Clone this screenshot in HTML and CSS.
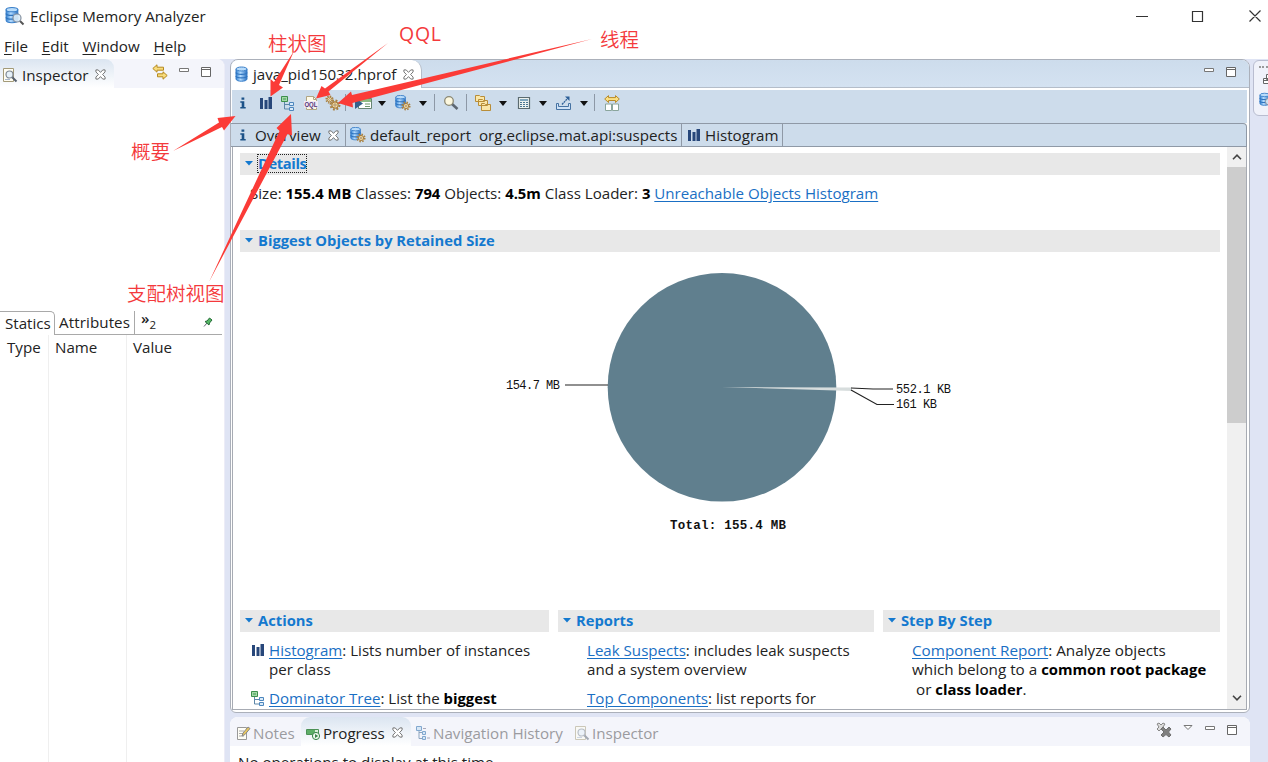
FILE: index.html
```html
<!DOCTYPE html>
<html lang="en">

<head>
    <meta charset="UTF-8">
    <meta name="viewport" content="width=device-width, initial-scale=1.0">
    <title>Eclipse Memory Analyzer</title>
    <link rel="stylesheet" href="styles.css">
</head>

<body>
    <!-- icon set -->
    <svg class="defs" width="0" height="0">
        <linearGradient id="blue" x1="0" x2="1">
            <stop offset="0" stop-color="#2f7fd0" />
            <stop offset=".4" stop-color="#b5dcff" />
            <stop offset="1" stop-color="#2a70c0" />
        </linearGradient>
        <symbol id="db" viewBox="0 0 16 16">
            <path d="M2 3v10c0 3 11 3 11 0V3z" fill="url(#blue)" stroke="#3a7fc9" />
            <ellipse cx="7.500" cy="3" rx="5.500" ry="2" fill="#b9dcfa" stroke="#3a7fc9" />
            <path d="M2 6.500c0 2.500 11 2.500 11 0M2 10c0 2.500 11 2.500 11 0" fill="none" stroke="#2f74bf" stroke-width="1.200" />
        </symbol>
        <symbol id="gear" viewBox="0 0 16 16">
            <circle cx="8" cy="8" r="6" fill="none" stroke="#a9803f" stroke-width="2.600" stroke-dasharray="2.500 2.212" />
            <circle cx="8" cy="8" r="4.200" fill="#f6dfa8" stroke="#a47a3a" stroke-width="1.500" />
            <circle cx="8" cy="8" r="1.500" fill="#fff" stroke="#8a6430" />
        </symbol>
        <symbol id="dbgear" viewBox="0 0 16 16">
            <use href="#db" x="-1" y="-1" width="14" height="15" />
            <use href="#gear" x="6" y="6" width="10" height="10" />
        </symbol>
        <symbol id="app" viewBox="0 0 20 20">
            <use href="#db" x="-1" y="0" width="17" height="18" />
            <path d="M14.500 14.500l4 4" stroke="#555" stroke-width="2" />
            <circle cx="12" cy="12" r="4" fill="#dcecf8" fill-opacity=".9" stroke="#8792a0" stroke-width="1.200" />
        </symbol>
        <symbol id="info" viewBox="0 0 16 16">
            <path d="M6.500 2.500h2.800v2.300H6.500zM5.300 6.300h4v5.800h1.400v1.400H5.300v-1.400h1.400V7.700H5.300z" fill="#1c5288" />
        </symbol>
        <symbol id="bars" viewBox="0 0 16 16">
            <path d="M2 3h3v11H2zM6.500 5h3v9h-3zM10.500 2h3.500v12h-3.500z" fill="#27477a" />
        </symbol>
        <symbol id="tree" viewBox="0 0 16 16">
            <path d="M4.500 7v7H9M4.500 9.500H9" fill="none" stroke="#5d87a8" />
            <path d="M1.500 1.500h6v5h-6z" fill="#a5d8a8" stroke="#3d8f4c" />
            <path d="M3 3h3v2H3z" fill="#6fb97b" />
            <path d="M9.500 7.500h4v3h-4zM9.500 12.500h4v3h-4z" fill="#d9ebfa" stroke="#4d86bd" />
        </symbol>
        <symbol id="gears" viewBox="0 0 16 16">
            <use href="#gear" x="0" y="0" width="9" height="9" />
            <use href="#gear" x="4" y="4" width="12" height="12" />
        </symbol>
        <symbol id="run" viewBox="0 0 18 16">
            <path d="M4.500 3.500h13v10h-13z" fill="#fff" stroke="#678573" />
            <path d="M5 4h12v3H5z" fill="#8dbb84" />
            <path d="M11 9h5M11 11.500h5" stroke="#6f9870" />
            <path d="M1 3v11l8-5.500z" fill="#35608b" />
        </symbol>
        <symbol id="search" viewBox="0 0 16 16">
            <path d="M9 9l5.500 5" stroke="#5d6772" stroke-width="2.600" />
            <circle cx="6" cy="6" r="4.300" fill="#fdf8df" stroke="#8c8974" stroke-width="1.300" />
        </symbol>
        <symbol id="inspect" viewBox="0 0 16 16">
            <path d="M1.500 1.500h10v13h-10z" fill="#fffdf3" stroke="#a39a78" />
            <path d="M3 12.500h5" stroke="#a6b7cc" />
            <path d="M10 10l4.500 4.500" stroke="#555f6d" stroke-width="2" />
            <circle cx="7.500" cy="7.500" r="3.500" fill="#e6f1f9" stroke="#7d8793" stroke-width="1.200" />
        </symbol>
        <symbol id="folders" viewBox="0 0 16 16">
            <path d="M.5.500h4l1 1h4v5h-9zM3.500 4.500h4l1 1h4v5h-9zM6.500 8.500h3l1 1h5v6h-9z" fill="#fbe7a8" stroke="#b88d38" />
        </symbol>
        <symbol id="calc" viewBox="0 0 16 16">
            <path d="M2.500 2.500h11v11h-11z" fill="#eef3f0" stroke="#5b6b70" stroke-width="1.200" />
            <path d="M4 4h8v2H4z" fill="#7fa6bd" />
            <path d="M4 7.500h8M4 9.500h8M4 11.500h8" stroke="#4c7792" stroke-width="1.200" stroke-dasharray="2 1" />
        </symbol>
        <symbol id="export" viewBox="0 0 16 16">
            <path d="M.5 8.500v6h14v-6h-2v3h-10v-3z" fill="#cfe2f7" stroke="#4673a3" />
            <path d="M6 9.500l6-6.500" fill="none" stroke="#2c5f98" stroke-width="1.300" stroke-dasharray="2 .6" />
            <path d="M9 1.500h4.500V6z" fill="#2c5f98" />
        </symbol>
        <symbol id="compare" viewBox="0 0 16 16">
            <path d="M.7 4L4.500.6v2h7v-2L15.300 4l-3.800 3.500v-2h-7v2z" fill="#fbe084" stroke="#b98b28" />
            <path d="M1.500 9h6v6.500h-6zM8.500 9h6v6.500h-6z" fill="#fff" stroke="#8aa59c" />
        </symbol>
        <symbol id="close" viewBox="0 0 12 12">
            <path d="M1 1h2.500L6 3.700 8.500 1H11v2.200L8.300 6 11 8.800V11H8.500L6 8.300 3.500 11H1V8.800L3.700 6 1 3.200z" fill="#fff" stroke="#6a6a6a" />
        </symbol>
        <symbol id="sync" viewBox="0 0 16 16">
            <path d="M.8 4.500L5 .8v2.400h6.500v3H5v2zM15.200 11.500L11 15.200v-2.400H5.500v-3H11v-2z" fill="#f8dc7d" stroke="#b58920" />
        </symbol>
        <symbol id="min" viewBox="0 0 12 12">
            <path d="M1.500 2.500h9v3h-9z" fill="#fff" stroke="#777" />
        </symbol>
        <symbol id="max" viewBox="0 0 12 12">
            <path d="M1.500 1.500h9v9h-9zM1.500 3.500h9" fill="#fff" stroke="#666" />
        </symbol>
        <symbol id="pin" viewBox="0 0 10 10">
            <path d="M1 9.500L4 6" stroke="#667" />
            <path d="M2 4.500l2-.5 2.500-3 2.500 2L6.500 6 6 8z" fill="#55b765" stroke="#236b35" />
        </symbol>
        <symbol id="notes" viewBox="0 0 16 16">
            <path d="M2.500 2.500h9v12h-9z" fill="#fffef6" stroke="#999" />
            <path d="M4 6h5M4 8.500h4M4 11h5" stroke="#aaa" />
            <path d="M7 11l1-3 5-6 2 1.500-5 6z" fill="#e8c65d" stroke="#888" />
        </symbol>
        <symbol id="progress" viewBox="0 0 16 16">
            <path d="M1.500 4.500h12v5h-12z" fill="#d9eed9" stroke="#4b9156" />
            <path d="M2 5h8v4H2z" fill="#5eae68" />
            <circle cx="11" cy="11" r="3.600" fill="#eff9ef" stroke="#388348" />
            <path d="M10 9v4l3.200-2z" fill="#388348" />
        </symbol>
        <symbol id="nav" viewBox="0 0 16 16">
            <path d="M4 5v8.500h3M4 7.500h3" fill="none" stroke="#8ba4bf" />
            <path d="M1.500 1.500h5v4h-5zM7.500 6.500h3v3h-3zM7.500 11.500h3v3h-3z" fill="#d7e7f6" stroke="#82a8cf" />
            <path d="M8 3.500h3M12 13h3" stroke="#aab" />
        </symbol>
        <symbol id="clear" viewBox="0 0 16 16">
            <path d="M1 2l2-1 2 2 2-2 2 1-2 3 2 2-2 2-2-2-2 2-2-2 2-2z" fill="#ddd" stroke="#888" />
            <path d="M5 7l2-2 3 3 3-3 2 2-2.500 3 2.500 3-2 2-3-2.500L7 15l-2-2 3-3z" fill="#808080" stroke="#707070" />
        </symbol>
        <symbol id="twisty" viewBox="0 0 8 5">
            <path d="M0 0h8L4 4.500z" fill="#1479cf" />
        </symbol>
    </svg>

    <header class="titlebar">
        <svg class="app-icon"><use href="#app" /></svg>
        <span class="app-title">Eclipse Memory Analyzer</span>
        <svg class="window-buttons" viewBox="0 0 126 14">
            <path d="M0 7.500h12M56.500 2.500h10v10h-10zM113.500 1.500l11 11M124.500 1.500l-11 11" fill="none" stroke="#333" stroke-width="1.200" />
        </svg>
    </header>
    <nav class="menubar">
        <span><u>F</u>ile</span>
        <span><u>E</u>dit</span>
        <span><u>W</u>indow</span>
        <span><u>H</u>elp</span>
    </nav>

    <main class="workbench">
        <aside class="inspector">
            <div class="view-header">
                <div class="view-tab inspector-tab">
                    <svg class="icon"><use href="#inspect" /></svg>
                    <span>Inspector</span>
                    <svg class="close"><use href="#close" /></svg>
                </div>
                <div class="view-tools">
                    <svg class="icon"><use href="#sync" /></svg>
                    <svg class="tool"><use href="#min" /></svg>
                    <svg class="tool"><use href="#max" /></svg>
                </div>
            </div>
            <div class="inspector-body"></div>
            <div class="sub-tabs">
                <div class="sub-tab selected">Statics</div>
                <div class="sub-tab attributes">Attributes</div>
                <div class="more">»<sub>2</sub></div>
                <svg class="pin"><use href="#pin" /></svg>
            </div>
            <div class="field-table">
                <div>Type</div>
                <div>Name</div>
                <div>Value</div>
            </div>
        </aside>

        <div class="center">
            <section class="editor">
                <div class="editor-tabs">
                    <div class="editor-tab">
                        <svg class="icon"><use href="#db" /></svg>
                        <span>java_pid15032.hprof</span>
                        <svg class="close"><use href="#close" /></svg>
                    </div>
                    <div class="view-tools">
                        <svg class="tool"><use href="#min" /></svg>
                        <svg class="tool"><use href="#max" /></svg>
                    </div>
                </div>
                <div class="toolbar">
                    <svg class="icon"><use href="#info" /></svg>
                    <svg class="icon"><use href="#bars" /></svg>
                    <svg class="icon"><use href="#tree" /></svg>
                    <svg class="icon" viewBox="0 0 16 16">
                        <path d="M3.500 1.500h7l3 3v10h-10z" fill="#fffbe9" stroke="#b1a582" />
                        <path d="M10.500 1.500v3h3" fill="none" stroke="#b1a582" />
                        <rect x="1" y="6" width="14" height="6.500" fill="#efe9f4" />
                        <text class="oql" x="1.400" y="11.800" textLength="13" lengthAdjust="spacingAndGlyphs">OQL</text>
                    </svg>
                    <svg class="icon"><use href="#gears" /></svg>
                    <i class="separator first"></i>
                    <svg class="icon wide"><use href="#run" /></svg>
                    <i class="arrow"></i>
                    <svg class="icon"><use href="#dbgear" /></svg>
                    <i class="arrow"></i>
                    <i class="separator"></i>
                    <svg class="icon"><use href="#search" /></svg>
                    <i class="separator"></i>
                    <svg class="icon"><use href="#folders" /></svg>
                    <i class="arrow"></i>
                    <svg class="icon"><use href="#calc" /></svg>
                    <i class="arrow"></i>
                    <svg class="icon"><use href="#export" /></svg>
                    <i class="arrow"></i>
                    <i class="separator"></i>
                    <svg class="icon"><use href="#compare" /></svg>
                </div>
                <div class="page-tabs">
                    <div class="page-tab overview">
                        <svg class="icon"><use href="#info" /></svg>
                        <span>Overview</span>
                        <svg class="close"><use href="#close" /></svg>
                    </div>
                    <div class="page-tab report">
                        <svg class="icon"><use href="#dbgear" /></svg>
                        <span>default_report&nbsp; org.eclipse.mat.api:suspects</span>
                    </div>
                    <div class="page-tab histogram">
                        <svg class="icon"><use href="#bars" /></svg>
                        <span>Histogram</span>
                    </div>
                </div>
                <div class="page">
                    <div class="form">
                        <h2 class="section-title"><svg><use href="#twisty" /></svg><span class="focused">Details</span></h2>
                        <p class="details">Size: <b>155.4 MB</b> Classes: <b>794</b> Objects: <b>4.5m</b> Class Loader: <b>3</b> <a>Unreachable Objects Histogram</a></p>
                        <h2 class="section-title"><svg><use href="#twisty" /></svg><span>Biggest Objects by Retained Size</span></h2>
                        <svg class="pie" viewBox="0 0 980 358">
                            <circle cx="482" cy="135.300" r="114.300" fill="#607f8e" />
                            <path d="M482 135l130 .5v3.500l-16-.5z" fill="#d7dddd" />
                            <path d="M325 133h43M611 136l22 1h20M611 138l26 14.500h17" fill="none" stroke="#222" stroke-width="1.200" />
                            <g class="pie-labels">
                                <text x="266" y="137" textLength="54">154.7 MB</text>
                                <text x="656" y="140.500" textLength="55">552.1 KB</text>
                                <text x="656" y="156" textLength="41">161 KB</text>
                            </g>
                            <text class="pie-total" x="430" y="277" textLength="116">Total: 155.4 MB</text>
                        </svg>
                        <div class="columns">
                            <div>
                                <h2 class="section-title"><svg><use href="#twisty" /></svg><span>Actions</span></h2>
                                <div class="entry">
                                    <svg class="icon"><use href="#bars" /></svg>
                                    <p><a>Histogram</a>: Lists number of instances<br>per class</p>
                                </div>
                                <div class="entry">
                                    <svg class="icon"><use href="#tree" /></svg>
                                    <p><a>Dominator Tree</a>: List the <b>biggest</b></p>
                                </div>
                            </div>
                            <div>
                                <h2 class="section-title"><svg><use href="#twisty" /></svg><span>Reports</span></h2>
                                <div class="entry plain">
                                    <p><a>Leak Suspects</a>: includes leak suspects<br>and a system overview</p>
                                </div>
                                <div class="entry plain">
                                    <p><a>Top Components</a>: list reports for</p>
                                </div>
                            </div>
                            <div>
                                <h2 class="section-title"><svg><use href="#twisty" /></svg><span>Step By Step</span></h2>
                                <div class="entry plain steps">
                                    <p><a>Component Report</a>: Analyze objects<br>which belong to a <b>common root package</b><br>&nbsp;or <b>class loader</b>.</p>
                                </div>
                            </div>
                        </div>
                    </div>
                    <div class="scrollbar">
                        <svg viewBox="0 0 10 6"><path d="M1 5.200l4-4 4 4" /></svg>
                        <div class="thumb"></div>
                        <svg viewBox="0 0 10 6"><path d="M1 .8l4 4 4-4" /></svg>
                    </div>
                </div>
            </section>

            <section class="bottom-view">
                <div class="view-header">
                    <div class="bottom-tab notes">
                        <svg class="icon"><use href="#notes" /></svg>
                        <span>Notes</span>
                    </div>
                    <div class="view-tab progress">
                        <svg class="icon"><use href="#progress" /></svg>
                        <span>Progress</span>
                        <svg class="close"><use href="#close" /></svg>
                    </div>
                    <div class="bottom-tab history">
                        <svg class="icon"><use href="#nav" /></svg>
                        <span>Navigation History</span>
                    </div>
                    <div class="bottom-tab faded">
                        <svg class="icon"><use href="#inspect" /></svg>
                        <span>Inspector</span>
                    </div>
                    <div class="view-tools">
                        <svg class="icon"><use href="#clear" /></svg>
                        <svg class="tool" viewBox="0 0 12 12"><path d="M2 1.500h8L6 5.500z" fill="#fff" stroke="#777" /></svg>
                        <svg class="tool"><use href="#min" /></svg>
                        <svg class="tool"><use href="#max" /></svg>
                    </div>
                </div>
                <p class="status">No operations to display at this time.</p>
            </section>
        </div>

        <aside class="trim">
            <div class="trim-stack">
                <i class="grip"></i>
                <svg class="restore" viewBox="0 0 12 12"><path d="M4.500 1.500h7v5h-7zM1.500 5.500h7v5h-7zM1.500 7.500h7" fill="#fff" stroke="#666" /></svg>
                <svg class="icon"><use href="#app" /></svg>
            </div>
        </aside>
    </main>

    <!-- callouts over the window -->
    <svg class="callouts" viewBox="0 0 1268 762">
        <g class="callout-arrows">
            <path d="M173 151L219 122.500 217.500 118 235.500 116 224 130.500 222 127z" />
            <path d="M209 282L279.500 131 276.500 128 291 114 292 135.500 287.500 134z" />
            <path d="M294 51L274 82 270.500 79 270.500 96.500 283 87.500 279 85z" />
            <path d="M388 43L325 88.500 321.500 86 316 98.500 330.500 95 328.500 91.500z" />
            <path d="M592 39L352 95 351 91.500 338 103 353 107.500 352.500 103z" />
        </g>
        <g class="callout-labels">
            <text x="268" y="51">柱状图</text>
            <text class="latin" x="399" y="41" textLength="42">QQL</text>
            <text x="600" y="47">线程</text>
            <text x="131" y="159">概要</text>
            <text x="127" y="301">支配树视图</text>
        </g>
    </svg>
</body>

</html>
```
FILE: styles.css
```css
* {
    box-sizing: border-box;
}

body {
    margin: 0;
    width: 1268px;
    height: 762px;
    overflow: hidden;
    display: flex;
    flex-direction: column;
    background-color: #fff;
    font-family: "Open Sans", "Noto Sans", sans-serif;
    font-size: 15.150px;
    color: #222;
    white-space: nowrap;
}

p,
h2 {
    margin: 0;
}

svg {
    display: block;
    flex: none;
}

.defs {
    position: absolute;
}

.icon {
    width: 16px;
    height: 16px;
}

.close {
    width: 11px;
    height: 11px;
}

.tool {
    width: 12px;
    height: 12px;
}

/* title and menu */
.titlebar {
    height: 32px;
    display: flex;
    align-items: center;
    padding: 0 6px 0 5px;
}

.app-icon {
    width: 20px;
    height: 20px;
    margin-right: 5px;
}

.window-buttons {
    width: 126px;
    height: 14px;
    margin-left: auto;
}

.menubar {
    height: 27px;
    display: flex;
    align-items: center;
    gap: 13.800px;
    padding-left: 4px;
}

.menubar u {
    text-underline-offset: 2px;
}

.workbench {
    flex: 1;
    min-height: 0;
    display: flex;
    background-color: #dfe4f4;
}

/* left side */
.inspector {
    width: 225px;
    margin-right: 5px;
    display: flex;
    flex-direction: column;
    background-color: #fff;
    border-top-right-radius: 8px;
    border-right: 1px solid #ececf7;
    overflow: hidden;
}

.view-header {
    height: 29px;
    flex: none;
    display: flex;
    align-items: center;
    background-color: #f4f5fb;
}

.view-tab {
    height: 100%;
    display: flex;
    align-items: center;
    background: linear-gradient(#dbe5f1, #fff);
    border-radius: 0 9px 0 0;
}

.inspector-tab {
    width: 114px;
    padding: 2px 0 0 2px;
}

.inspector-tab span {
    margin: 0 7px 0 4px;
}

.view-tools {
    display: flex;
    align-items: center;
    gap: 10px;
    margin-left: auto;
    padding: 0 12px 4px 0;
}

.inspector-body {
    height: 223px;
}

.sub-tabs {
    height: 24px;
    display: flex;
    line-height: 23px;
}

.sub-tab {
    border-bottom: 1px solid #a9a9a9;
}

.sub-tab.selected {
    width: 55px;
    padding-left: 5px;
    border: 1px solid #a9a9a9;
    border-width: 1px 1px 0 0;
    border-top-right-radius: 5px;
    line-height: 22px;
}

.attributes {
    width: 80px;
    padding-left: 4px;
    border-right: 1px solid #a9a9a9;
    letter-spacing: .1px;
}

.more {
    width: 87px;
    padding-left: 6px;
    border-bottom: 1px solid #a9a9a9;
    line-height: 14px;
    font-weight: 600;
}

.more sub {
    font-size: 11.500px;
    font-weight: 400;
    line-height: 0;
    vertical-align: -5px;
}

.pin {
    width: 10px;
    height: 10px;
    margin: 6px 0 0 -19px;
}

.field-table {
    flex: 1;
    display: grid;
    grid-template-columns: 49px 78px 1fr;
    line-height: 25px;
}

.field-table div {
    padding-left: 6px;
    border-right: 1px solid #efefef;
}

.field-table div:first-child {
    padding-left: 7px;
}

.field-table div:last-child {
    border: 0;
}

/* editor */
.center {
    width: 1020px;
    display: flex;
    flex-direction: column;
    gap: 4px;
}

.editor {
    height: 654px;
    display: flex;
    flex-direction: column;
    border: 1px solid #abb0ba;
    border-radius: 8px 8px 6px 6px;
    background-color: #fff;
    overflow: hidden;
    padding: 0 2px 2px 1px;
}

.editor-tabs {
    height: 28px;
    display: flex;
    align-items: center;
    margin: 0 -2px 0 -1px;
    background: linear-gradient(#cddcec, #d4e2f1);
    border-bottom: 1px solid #b4bdc9;
}

.editor-tab {
    width: 191px;
    height: 28px;
    display: flex;
    align-items: center;
    padding: 1px 0 0 3px;
    background-color: #fff;
    border-right: 1px solid #b4bdc9;
    border-radius: 7px 10px 0 0;
}

.editor-tab span {
    margin: 0 7px 0 3px;
}

.toolbar {
    height: 33px;
    display: flex;
    align-items: center;
    margin-top: 2px;
    padding: 0 0 8px 3px;
    gap: 6.500px;
    background-color: #cddceb;
}

.toolbar .wide {
    width: 18px;
    margin: 0 -1px;
}

.oql {
    font-family: "Liberation Sans", sans-serif;
    font-size: 7px;
    font-weight: bold;
    fill: #553377;
}

.separator {
    width: 1px;
    height: 17px;
    margin-right: 2px;
    background-color: #8d98a6;
}

.arrow + .separator,
.separator.first {
    margin-left: -2.200px;
}

.arrow {
    margin: 1px 2.500px 0 1px;
    border: 4.500px solid transparent;
    border-top: 5px solid #111;
    border-bottom: 0;
}

.page-tabs {
    height: 24px;
    display: flex;
    background-color: #cddceb;
    border: 1px solid #8f99a6;
    border-width: 1px 1px 1px 0;
    border-top-right-radius: 4px;
    margin-left: -1px;
}

.page-tab {
    display: flex;
    align-items: center;
    border-right: 1px solid #8f99a6;
    padding-left: 4px;
}

.overview {
    width: 115px;
}

.overview span {
    margin: 0 7px 0 4px;
}

.report {
    width: 336px;
}

.report span {
    margin-left: 4px;
}

.histogram {
    width: 101px;
}

.histogram span {
    margin-left: 3px;
}

.page {
    flex: 1;
    min-height: 0;
    display: flex;
    border: 1px solid #a7abb3;
    border-top: 0;
}

.form {
    width: 995px;
    padding: 6px 0 0 7px;
    overflow: hidden;
}

.section-title {
    height: 22px;
    width: 100%;
    display: flex;
    align-items: center;
    background-color: #e8e8e8;
    color: #1479cf;
    font-size: 14.750px;
    font-weight: 700;
    padding: 0 0 2px 5px;
}

.form > .section-title {
    width: 980px;
}

.section-title svg {
    width: 8px;
    height: 5px;
    margin-right: 4px;
}

.section-title span {
    line-height: 17px;
    border: 1px solid transparent;
}

.section-title .focused {
    border: 1px dotted #222;
    letter-spacing: -.4px;
}

a {
    color: #1a6fc4;
    text-decoration: underline;
    text-underline-offset: 2px;
}

b {
    color: #000;
    font-size: 14.800px;
}

.details {
    height: 55px;
    padding-left: 10px;
    line-height: 37px;
    font-size: 15.100px;
}

.pie {
    width: 980px;
    height: 358px;
}

.pie-labels,
.pie-total {
    font-family: "Liberation Mono", monospace;
    font-size: 12px;
    fill: #111;
}

.pie-total {
    font-size: 12.500px;
    font-weight: bold;
}

.columns {
    display: grid;
    grid-template-columns: 309px 316px 337px;
    gap: 9px;
}

.entry {
    display: flex;
    padding: 9px 0 0 10px;
    font-size: 15.100px;
    line-height: 19.300px;
}

.entry .icon {
    margin: 1px 3px 0 0;
}

.entry.plain {
    padding-left: 29px;
}

.entry.steps {
    font-size: 15.250px;
}

.scrollbar {
    width: 19px;
    display: flex;
    flex-direction: column;
    align-items: center;
    background-color: #f0f0f0;
    padding: 7px 0 8px;
}

.scrollbar svg {
    width: 10px;
    height: 6px;
    fill: none;
    stroke: #444;
    stroke-width: 1.600;
}

.thumb {
    width: 19px;
    height: 256px;
    margin: 7px 0 auto;
    background-color: #cdcdcd;
}

/* bottom view */
.bottom-view {
    flex: 1;
    min-height: 0;
    background-color: #fff;
    border-radius: 8px 8px 0 0;
    overflow: hidden;
}

.bottom-tab {
    display: flex;
    align-items: center;
    color: #9b9b9f;
    padding-top: 2px;
}

.bottom-tab span {
    margin-left: 2px;
}

.notes {
    width: 71px;
    padding-left: 5px;
}

.progress {
    width: 110px;
    padding: 2px 0 0 4px;
    border-radius: 9px 9px 0 0;
}

.progress span {
    margin: 0 7px 0 2px;
}

.history {
    width: 163px;
    padding-left: 4px;
}

.history span {
    margin-left: 2px;
}

.faded .icon {
    opacity: .5;
}

.status {
    padding: 6px 0 0 8px;
}

/* right trim */
.trim {
    flex: 1;
    padding: 1px 0 0 3px;
    overflow: hidden;
}

.trim-stack {
    width: 24px;
    height: 56px;
    padding: 5px 0 0 5px;
    background-color: #f0f2fa;
    border: 1px solid #b9bdd0;
    border-radius: 6px;
}

.grip {
    display: block;
    width: 12px;
    border-top: 2px dotted #999;
}

.restore {
    width: 12px;
    height: 12px;
    margin: 5px 0 7px 3px;
}

/* callouts */
.callouts {
    position: absolute;
    top: 0;
    left: 0;
    width: 1268px;
    height: 762px;
    pointer-events: none;
}

.callout-arrows {
    fill: #fb3b37;
}

.callout-labels {
    font-family: "Noto Sans CJK SC", sans-serif;
    font-size: 19.500px;
    font-weight: 350;
    fill: #f4393c;
}

.callout-labels .latin {
    font-family: "Open Sans", sans-serif;
    font-weight: 400;
}
```
